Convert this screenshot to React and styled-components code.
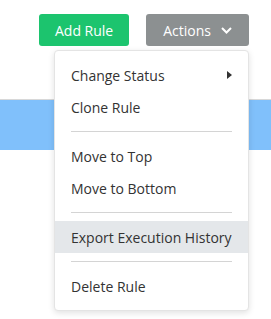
import React from "react";
import styled, { createGlobalStyle } from "styled-components";

const GlobalStyle = createGlobalStyle`
    body {
        margin: 0;
        background: #ffffff;
        font-family: "Open Sans", "Liberation Sans", sans-serif;
    }
`

const Page = styled.div`
    width: 271px;
    height: 319px;
    overflow: hidden;
    background: #ffffff;
`

const Toolbar = styled.div`
    display: flex;
    justify-content: flex-end;
    gap: 17px;
    padding: 14px 22px 0 0;
`

const Button = styled.button`
    height: 32px;
    padding: 0 ${p => p.$pad || 15}px;
    border: 0;
    border-radius: 3px;
    background-color: ${p => p.$color};
    color: #ffffff;
    font-family: inherit;
    font-size: 14px;
    display: flex;
    align-items: center;
    gap: 10px;
    cursor: pointer;
`

const Dropdown = styled.div`
    position: relative;
`

const Band = styled.div`
    margin-top: 53px;
    height: 50px;
    background-color: #80c0fb;
    border-top: 1px solid #d8d8d8;
`

const Menu = styled.ul`
    position: absolute;
    top: 36px;
    right: 0;
    width: 193px;
    margin: 0;
    padding: 8px 0;
    list-style: none;
    background: #ffffff;
    border: 1px solid #e4e4e4;
    border-radius: 4px;
    box-shadow: 0 2px 6px rgba(0, 0, 0, 0.12);
    z-index: 2;
`

const Item = styled.li`
    height: 32px;
    padding: 0 16px;
    display: flex;
    align-items: center;
    justify-content: space-between;
    font-size: 14px;
    color: #333333;
    background-color: ${p => (p.$active ? "#e4e7ea" : "transparent")};
    white-space: nowrap;
`

const Divider = styled.li`
    height: 1px;
    margin: 8px 16px;
    background-color: #d4d4d4;
`

const Caret = styled.span`
    width: 0;
    height: 0;
    border-top: 4px solid transparent;
    border-bottom: 4px solid transparent;
    border-left: 5px solid #333333;
`

export default function App() {
    return (
        <Page>
            <GlobalStyle />
            <Toolbar>
                <Button $color="#1cc46e" $pad={16}>Add Rule</Button>
                <Dropdown>
                    <Button $color="#8c9091" $pad={17}>
                        Actions
                        <svg width="11" height="7" viewBox="0 0 11 7" fill="none">
                            <path d="M1 1l4.5 4.5L10 1" stroke="#ffffff" strokeWidth="2" />
                        </svg>
                    </Button>
                    <Menu>
                        <Item>Change Status<Caret /></Item>
                        <Item>Clone Rule</Item>
                        <Divider />
                        <Item>Move to Top</Item>
                        <Item>Move to Bottom</Item>
                        <Divider />
                        <Item $active>Export Execution History</Item>
                        <Divider />
                        <Item>Delete Rule</Item>
                    </Menu>
                </Dropdown>
            </Toolbar>
            <Band />
        </Page>
    );
}
